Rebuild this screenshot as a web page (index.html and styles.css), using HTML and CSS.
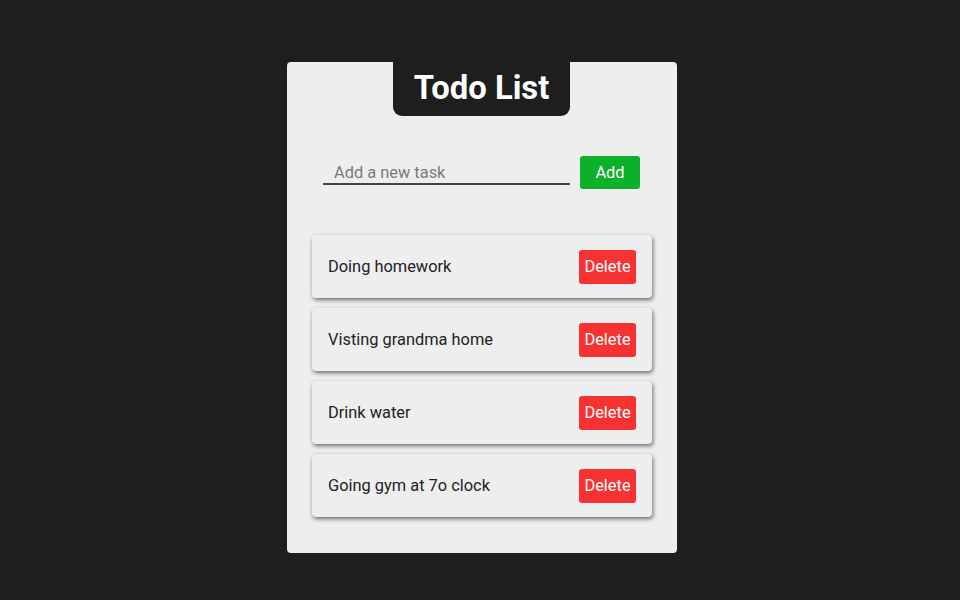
FILE: index.html
```html
<!DOCTYPE html>
<html>
<head>
<meta charset="utf-8">
<link rel="stylesheet" href="styles.css">
</head>
<body>
<div class="page">
  <div class="card">
    <div class="title">Todo List</div>
    <div class="add-row">
      <input class="task-input" type="text" placeholder="Add a new task">
      <button class="add-btn">Add</button>
    </div>
    <ul class="list">
      <li class="item"><span class="item-text">Doing homework</span><button class="del-btn">Delete</button></li>
      <li class="item"><span class="item-text">Visting grandma home</span><button class="del-btn">Delete</button></li>
      <li class="item"><span class="item-text">Drink water</span><button class="del-btn">Delete</button></li>
      <li class="item"><span class="item-text">Going gym at 7o clock</span><button class="del-btn">Delete</button></li>
    </ul>
  </div>
</div>
</body>
</html>
```
FILE: styles.css
```css
html, body {
  margin: 0;
  padding: 0;
  background: #1e1e1e;
  font-family: Roboto, "Liberation Sans", sans-serif;
}
.page {
  width: 960px;
  height: 600px;
  display: flex;
  justify-content: center;
  align-items: flex-start;
  padding-top: 62px;
  box-sizing: border-box;
}
.card {
  width: 390px;
  margin-left: 4px;
  background: #eeeeee;
  border-radius: 4px;
  display: flex;
  flex-direction: column;
  align-items: center;
  padding-bottom: 36px;
}
.title {
  background: #1e1e1e;
  color: #ffffff;
  font-weight: 700;
  font-size: 32.8px;
  height: 54px;
  line-height: 52px;
  border-radius: 0 0 9px 9px;
  box-sizing: border-box;
  width: 177px;
  margin-right: 1px;
  text-align: center;
}
.add-row {
  margin-top: 40px;
  margin-right: 1px;
  display: flex;
  align-items: flex-end;
  gap: 10px;
}
.task-input {
  width: 247px;
  height: 29px;
  box-sizing: border-box;
  border: none;
  border-bottom: 2px solid #444444;
  background: transparent;
  font-family: Roboto, "Liberation Sans", sans-serif;
  font-size: 16.4px;
  padding: 5px 11px 0 11px;
  outline: none;
  color: #222;
  margin-bottom: 4px;
}
.task-input::placeholder {
  color: #7a7a7a;
}
.add-btn {
  width: 60px;
  height: 33px;
  border: none;
  border-radius: 3px;
  background: #0db02b;
  color: #ffffff;
  font-family: Roboto, "Liberation Sans", sans-serif;
  font-size: 16.4px;
  padding: 0;
}
.list {
  list-style: none;
  margin: 46px 0 0 0;
  padding: 0;
  display: flex;
  flex-direction: column;
  gap: 10px;
}
.item {
  width: 340px;
  height: 63px;
  box-sizing: border-box;
  background: #eeeeee;
  border-radius: 4px;
  box-shadow: 1px 2px 4px rgba(0, 0, 0, 0.55);
  display: flex;
  align-items: center;
  justify-content: space-between;
  padding: 0 16px 0 16px;
}
.item-text {
  font-size: 16.4px;
  color: #222222;
}
.del-btn {
  width: 57px;
  height: 34px;
  border: none;
  border-radius: 3px;
  background: #f73232;
  color: #ffffff;
  font-family: Roboto, "Liberation Sans", sans-serif;
  font-size: 16.4px;
  padding: 0;
}
```
